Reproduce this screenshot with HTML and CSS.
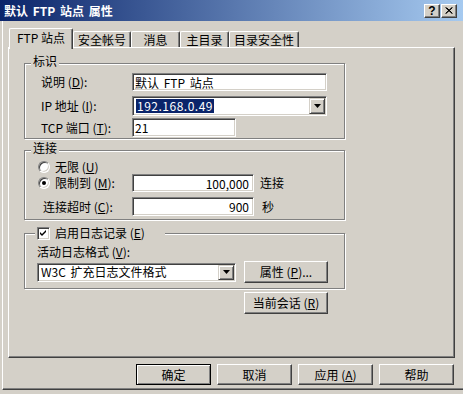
FILE: index.html
```html
<!DOCTYPE html>
<html lang="zh-CN">
<head>
    <meta charset="UTF-8">
    <title>默认 FTP 站点 属性</title>
    <link rel="stylesheet" href="styles.css">
</head>
<body>
    <div class="window">
        <!-- 标题栏 -->
        <div class="titlebar">
            <span class="title">默认 FTP 站点 属性</span>
            <div class="caption-buttons">
                <span class="cap-btn cap-help">?</span>
                <span class="cap-btn">
                    <svg width="8" height="7" viewBox="0 0 8 7">
                        <path d="M0.5 0.5 L7 6.5 M1.5 0.5 L7.5 6.5 M7 0.5 L0.5 6.5 M7.5 0.5 L1 6.5" stroke="#000" stroke-width="1"/>
                    </svg>
                </span>
            </div>
        </div>

        <div class="client">
            <!-- 选项卡 -->
            <div class="tabs">
                <div class="tab active" style="width: 64px;">FTP 站点</div>
                <div class="tab" style="width: 58px;">安全帐号</div>
                <div class="tab" style="width: 49px;">消息</div>
                <div class="tab" style="width: 49px;">主目录</div>
                <div class="tab" style="width: 70px;">目录安全性</div>
            </div>

            <div class="panel">
                <!-- 标识 -->
                <div class="group group-id">
                    <span class="group-title">标识</span>
                    <div class="row row-desc">
                        <span class="label">说明 (<u>D</u>):</span>
                        <div class="field field-wide">默认 FTP 站点</div>
                    </div>
                    <div class="row row-ip">
                        <span class="label">IP 地址 (<u>I</u>):</span>
                        <div class="combo combo-ip">
                            <div class="combo-text"><span class="selected">192.168.0.49</span></div>
                            <div class="drop-btn">
                                <svg width="7" height="4" viewBox="0 0 7 4"><path d="M0 0 H7 L3.5 4 Z" fill="#000"/></svg>
                            </div>
                        </div>
                    </div>
                    <div class="row row-port">
                        <span class="label">TCP 端口 (<u>T</u>):</span>
                        <div class="field field-port">21</div>
                    </div>
                </div>

                <!-- 连接 -->
                <div class="group group-conn">
                    <span class="group-title">连接</span>
                    <div class="row row-unlimited">
                        <span class="radio"></span>
                        <span class="radio-label">无限 (<u>U</u>)</span>
                    </div>
                    <div class="row row-limit">
                        <span class="radio checked"></span>
                        <span class="radio-label limit-label">限制到 (<u>M</u>):</span>
                        <div class="field field-num">100,000</div>
                        <span class="unit">连接</span>
                    </div>
                    <div class="row row-timeout">
                        <span class="label timeout-label">连接超时 (<u>C</u>):</span>
                        <div class="field field-num field-timeout">900</div>
                        <span class="unit unit-sec">秒</span>
                    </div>
                </div>

                <!-- 日志记录 -->
                <div class="group group-log">
                    <span class="group-title check-title">
                        <span class="checkbox">
                            <svg width="7" height="7" viewBox="0 0 7 7"><path d="M0 2 L2 4 L6 0 V2 L2 6 L0 4 Z" fill="#000"/></svg>
                        </span>
                        <span class="check-label">启用日志记录 (<u>E</u>)</span>
                    </span>
                    <div class="row row-format-label">
                        <span>活动日志格式 (<u>V</u>):</span>
                    </div>
                    <div class="row row-format">
                        <div class="combo combo-log">
                            <div class="combo-text">W3C 扩充日志文件格式</div>
                            <div class="drop-btn">
                                <svg width="7" height="4" viewBox="0 0 7 4"><path d="M0 0 H7 L3.5 4 Z" fill="#000"/></svg>
                            </div>
                        </div>
                        <div class="btn btn-props">属性 (<u>P</u>)...</div>
                    </div>
                </div>

                <div class="btn btn-session">当前会话 (<u>R</u>)</div>
            </div>

            <!-- 底部按钮 -->
            <div class="footer">
                <div class="btn btn-dialog default">确定</div>
                <div class="btn btn-dialog">取消</div>
                <div class="btn btn-dialog">应用 (<u>A</u>)</div>
                <div class="btn btn-dialog">帮助</div>
            </div>
        </div>
    </div>
</body>
</html>
```

FILE: styles.css
```css
/* Classic Windows 2000 property sheet */
* {
    box-sizing: border-box;
}

body {
    margin: 0;
    background-color: #d4d0c8;
    font-family: "Noto Sans CJK SC", sans-serif;
    font-size: 12px;
    color: #000;
}

u {
    text-decoration: underline;
    text-underline-offset: 1px;
}

.window {
    width: 463px;
    height: 394px;
    background-color: #d4d0c8;
    overflow: hidden;
}

.titlebar {
    height: 21px;
    display: flex;
    align-items: center;
    padding: 0 6px 0 4px;
    background: linear-gradient(to right, #0a246a, #a6caf0);
}

.title {
    flex: 1;
    color: #fff;
    font-weight: bold;
    line-height: 14px;
    word-spacing: 2px;
}

.caption-buttons {
    display: flex;
    gap: 1px;
}

.cap-btn {
    width: 16px;
    height: 14px;
    display: flex;
    align-items: center;
    justify-content: center;
    background-color: #d4d0c8;
    border: 1px solid;
    border-color: #fff #404040 #404040 #fff;
    box-shadow: inset -1px -1px 0 #808080;
    font-family: "Liberation Sans", sans-serif;
    font-weight: bold;
    font-size: 12px;
    line-height: 12px;
}

.client {
    height: 369px;
    margin-left: 2px;
    border-left: 1px solid #fff;
    border-bottom: 1px solid #404040;
    box-shadow: inset 0 -1px 0 #808080;
}

/* Tabs */
.tabs {
    height: 26px;
    display: flex;
    align-items: flex-end;
    padding-left: 6px;
}

.tab {
    height: 16px;
    display: flex;
    align-items: center;
    justify-content: center;
    border: 1px solid;
    border-bottom: none;
    border-color: #fff #404040 #fff #fff;
    border-radius: 2px 2px 0 0;
    box-shadow: inset -1px 0 0 #808080;
    line-height: 14px;
}

.tab.active {
    position: relative;
    z-index: 1;
    height: 21px;
    margin-bottom: -2px;
    padding-bottom: 3px;
    background-color: #d4d0c8;
}

.panel {
    width: 447px;
    height: 311px;
    margin-left: 5px;
    padding: 15px 0 0 15px;
    border: 1px solid;
    border-color: #fff #404040 #404040 #fff;
    box-shadow: inset -1px -1px 0 #808080;
}

/* Group boxes */
.group {
    position: relative;
    width: 321px;
    border: 1px solid #808080;
    box-shadow: inset 1px 1px 0 #fff, 1px 1px 0 #fff;
}

.group-title {
    position: absolute;
    top: -9px;
    left: 6px;
    padding: 0 2px;
    line-height: 12px;
    background-color: #d4d0c8;
}

.row {
    display: flex;
    align-items: center;
}

.label {
    line-height: 16px;
}

.group-id {
    height: 76px;
    padding: 9px 0 0 16px;
}

.group-id .label {
    width: 91px;
}

.row-desc {
    height: 18px;
}

.row-ip {
    height: 20px;
    margin-top: 5px;
}

.row-port {
    height: 19px;
    margin-top: 2px;
}

/* Fields */
.field,
.combo {
    height: 100%;
    background-color: #fff;
    border: 1px solid;
    border-color: #808080 #fff #fff #808080;
    box-shadow: inset 1px 1px 0 #404040, inset -1px -1px 0 #d4d0c8;
    line-height: 14px;
    white-space: nowrap;
}

.field {
    padding: 1px 2px 0 2px;
    display: flex;
    align-items: center;
    word-spacing: 2px;
}

.field-wide {
    width: 195px;
}

.field-port {
    width: 104px;
}

.field-num {
    width: 122px;
    justify-content: flex-end;
    padding-right: 4px;
}

.combo {
    display: flex;
    padding: 1px;
}

.combo-ip {
    width: 195px;
}

.combo-text {
    flex: 1;
    display: flex;
    align-items: center;
    padding-left: 2px;
    word-spacing: 2px;
}

.selected {
    background-color: #0a246a;
    color: #fff;
    padding: 0 1px;
    line-height: 14px;
    letter-spacing: 0.5px;
}

.drop-btn {
    width: 16px;
    height: 100%;
    display: flex;
    align-items: center;
    justify-content: center;
    background-color: #d4d0c8;
    border: 1px solid;
    border-color: #d4d0c8 #404040 #404040 #d4d0c8;
    box-shadow: inset 1px 1px 0 #fff, inset -1px -1px 0 #808080;
}

/* Connection group */
.group-conn {
    height: 70px;
    margin-top: 11px;
    padding: 9px 0 0 13px;
}

.row-unlimited {
    height: 14px;
}

.row-limit {
    height: 18px;
}

.row-timeout {
    height: 19px;
    margin-top: 5px;
}

.radio {
    position: relative;
    width: 12px;
    height: 12px;
    border-radius: 50%;
    background-color: #fff;
    border: 1px solid;
    border-color: #808080 #fff #fff #808080;
    box-shadow: inset 1px 1px 0 #404040, inset -1px -1px 0 #d4d0c8;
}

.radio.checked::after {
    content: "";
    position: absolute;
    top: 3px;
    left: 3px;
    width: 4px;
    height: 4px;
    border-radius: 50%;
    background-color: #000;
}

.radio-label {
    margin-left: 5px;
    line-height: 16px;
}

.limit-label {
    width: 77px;
}

.timeout-label {
    width: 89px;
    margin-left: 5px;
}

.unit {
    margin-left: 6px;
    line-height: 16px;
}

.unit-sec {
    margin-left: 8px;
}

/* Logging group */
.group-log {
    height: 56px;
    margin-top: 13px;
    padding: 10px 0 0 12px;
}

.check-title {
    top: -8px;
    left: 10px;
    width: 130px;
    display: flex;
    align-items: center;
    line-height: 14px;
}

.checkbox {
    width: 13px;
    height: 13px;
    display: flex;
    align-items: center;
    justify-content: center;
    background-color: #fff;
    border: 1px solid;
    border-color: #808080 #fff #fff #808080;
    box-shadow: inset 1px 1px 0 #404040, inset -1px -1px 0 #d4d0c8;
}

.check-label {
    margin-left: 5px;
}

.row-format-label {
    height: 16px;
    line-height: 16px;
}

.row-format {
    height: 22px;
    margin-top: 1px;
}

.combo-log {
    width: 199px;
    height: 19px;
}

/* Buttons */
.btn {
    display: flex;
    align-items: center;
    justify-content: center;
    background-color: #d4d0c8;
    border: 1px solid;
    border-color: #fff #404040 #404040 #fff;
    box-shadow: inset -1px -1px 0 #808080;
    line-height: 14px;
    white-space: nowrap;
}

.btn-props {
    width: 84px;
    height: 22px;
    margin-left: 8px;
}

.btn-session {
    width: 84px;
    height: 22px;
    margin: 3px 0 0 220px;
}

.footer {
    display: flex;
    justify-content: flex-end;
    gap: 6px;
    margin-top: 6px;
    padding-right: 9px;
}

.btn-dialog {
    width: 75px;
    height: 21px;
}

.btn.default {
    border-color: #000;
    box-shadow: inset 1px 1px 0 #fff, inset -1px -1px 0 #808080;
}
```
